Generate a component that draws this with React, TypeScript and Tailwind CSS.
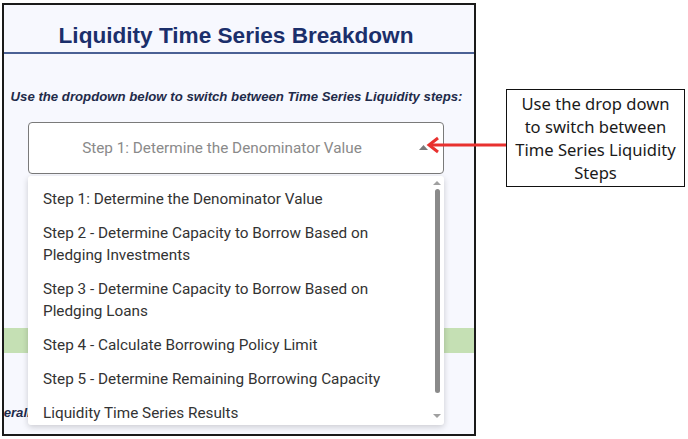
const steps = [
  "Step 1: Determine the Denominator Value",
  "Step 2 - Determine Capacity to Borrow Based on Pledging Investments",
  "Step 3 - Determine Capacity to Borrow Based on Pledging Loans",
  "Step 4 - Calculate Borrowing Policy Limit",
  "Step 5 - Determine Remaining Borrowing Capacity",
  "Liquidity Time Series Results",
];

function StepMenu() {
  return (
    <div className="absolute left-0 top-full mt-[2px] w-[416px] h-[249px] bg-white rounded-[3px] shadow-[0_2px_6px_rgba(0,0,0,0.18)] overflow-hidden">
      <ul className="pt-[6px] pl-[15px] pr-[40px] text-[15.3px] leading-[22px] text-[#333] font-['Roboto',sans-serif]">
        {steps.map((s) => (
          <li key={s} className="py-[6px]">
            {s}
          </li>
        ))}
      </ul>

      {/* scrollbar */}
      <div className="absolute right-[3px] top-0 bottom-0 w-[8px] flex flex-col items-center">
        <svg width="8" height="6" viewBox="0 0 8 6" className="mt-[4px]">
          <path d="M0 5 L4 1 L8 5 Z" fill="#a0a0a0" />
        </svg>
        <div className="mt-[3px] w-[5px] h-[204px] rounded-full bg-[#8a8a8a]" />
        <svg width="8" height="6" viewBox="0 0 8 6" className="mt-auto mb-[6px]">
          <path d="M0 1 L4 5 L8 1 Z" fill="#a0a0a0" />
        </svg>
      </div>
    </div>
  );
}

export default function App() {
  return (
    <div className="relative w-[688px] h-[439px] bg-white overflow-hidden">
      <div className="flex pl-[2px] pt-[3px]">
        {/* Main panel */}
        <div className="w-[474px] h-[433px] border-2 border-[#1a1a1a] bg-[#f7f8fe] overflow-hidden">
          <div className="h-[49px] border-b-2 border-[#4b6195] pt-[18px] pr-[6px] text-center font-['Liberation_Sans',Arial,sans-serif] font-bold text-[22.6px] leading-[26px] text-[#1b2f6b]">
            Liquidity Time Series Breakdown
          </div>

          <p className="mt-[35px] pr-[5px] text-center font-['Liberation_Sans',Arial,sans-serif] font-bold italic text-[13.2px] leading-[16px] text-[#1f2b4a]">
            Use the dropdown below to switch between Time Series Liquidity steps:
          </p>

          <div className="relative mt-[17px] ml-[24px] w-[416px] z-10">
            <div className="h-[52px] border border-[#7a7a7a] rounded-[4px] bg-white flex items-center">
              <span className="flex-1 text-center pr-[4px] font-['Roboto',sans-serif] text-[15.3px] text-[#8a8a8a]">
                Step 1: Determine the Denominator Value
              </span>
              <svg width="9" height="5" viewBox="0 0 9 5" className="mr-[15px] -mt-[2px]">
                <path d="M0 5 L4.5 0 L9 5 Z" fill="#7a7a7a" />
              </svg>
            </div>
            <StepMenu />
          </div>

          <div className="mt-[154px] h-[25px] bg-[#c5e0b4]" />

          <p className="mt-[52px] -ml-[26px] whitespace-nowrap font-['Liberation_Sans',Arial,sans-serif] font-bold italic text-[13.2px] leading-[16px] text-[#1f2b4a]">
            Generalized
          </p>
        </div>

        {/* Callout */}
        <div className="ml-[30px] mt-[86px] w-[179px] h-[98px] border border-[#111] bg-white flex items-center justify-center text-center font-['Noto_Sans',sans-serif] text-[16.6px] leading-[23px] text-[#1a1a1a]">
          <p>
            Use the drop down
            <br />
            to switch between
            <br />
            Time Series Liquidity
            <br />
            Steps
          </p>
        </div>
      </div>

      {/* Red arrow pointing at the dropdown */}
      <svg className="absolute z-20 left-[426px] top-[136px]" width="82" height="18" viewBox="0 0 82 18">
        <path d="M80 9 L4 9" stroke="#e8312f" strokeWidth="3" />
        <path d="M12 2 L3 9 L12 16" stroke="#e8312f" strokeWidth="3" fill="none" strokeLinejoin="miter" />
      </svg>
    </div>
  );
}
